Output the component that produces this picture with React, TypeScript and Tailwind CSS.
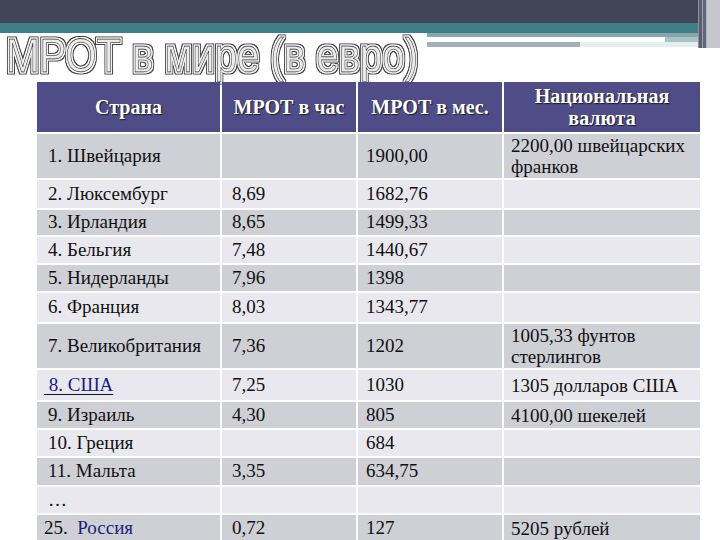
import React from "react";

type Row = {
  c: React.ReactNode;
  h: string;
  m: string;
  n: string;
  ht: string;
  pl?: string;
};

const rows: Row[] = [
  { c: "1. Швейцария", h: "", m: "1900,00", n: "2200,00 швейцарских франков", ht: "h-[44px]" },
  { c: "2. Люксембург", h: "8,69", m: "1682,76", n: "", ht: "h-[28px]" },
  { c: "3. Ирландия", h: "8,65", m: "1499,33", n: "", ht: "h-[25px]" },
  { c: "4. Бельгия", h: "7,48", m: "1440,67", n: "", ht: "h-[26px]" },
  { c: "5. Нидерланды", h: "7,96", m: "1398", n: "", ht: "h-[26px]" },
  { c: "6. Франция", h: "8,03", m: "1343,77", n: "", ht: "h-[29px]" },
  { c: "7. Великобритания", h: "7,36", m: "1202", n: "1005,33 фунтов стерлингов", ht: "h-[44px]" },
  {
    c: <span className="text-[#1a1a80] underline underline-offset-[3px] decoration-[#111]">{"\u00a08. США"}</span>,
    h: "7,25",
    m: "1030",
    n: "1305 долларов США",
    ht: "h-[30px]",
    pl: "pl-[7px]",
  },
  { c: "9. Израиль", h: "4,30", m: "805", n: "4100,00 шекелей", ht: "h-[26px]" },
  { c: "10. Греция", h: "", m: "684", n: "", ht: "h-[26px]" },
  { c: "11. Мальта", h: "3,35", m: "634,75", n: "", ht: "h-[27px]" },
  { c: "…", h: "", m: "", n: "", ht: "h-[26px]" },
  {
    c: (
      <span>
        25.&nbsp; <span className="text-[#1f1f7a]">Россия</span>
      </span>
    ),
    h: "0,72",
    m: "127",
    n: "5205 рублей",
    ht: "h-[26px]",
    pl: "pl-[7px]",
  },
];

function Title() {
  return (
    <svg width="427" height="49" className="block overflow-visible">
      <defs>
        <filter id="dbl" x="-5%" y="-30%" width="110%" height="160%">
          <feMorphology in="SourceAlpha" operator="dilate" radius="2" result="outer" />
          <feFlood floodColor="#3a3a3a" result="dark" />
          <feComposite in="dark" in2="outer" operator="in" result="outerDark" />
          <feMorphology in="SourceAlpha" operator="dilate" radius="1.2" result="mid" />
          <feFlood floodColor="#ffffff" result="white" />
          <feComposite in="white" in2="mid" operator="in" result="midWhite" />
          <feMerge>
            <feMergeNode in="outerDark" />
            <feMergeNode in="midWhite" />
            <feMergeNode in="SourceGraphic" />
          </feMerge>
        </filter>
      </defs>
      <text
        x="6"
        y="39"
        fontFamily="'Liberation Sans', Arial, sans-serif"
        fontSize="49"
        fill="#ececec"
        stroke="#3a3a3a"
        strokeWidth="0.8"
        textLength="412"
        lengthAdjust="spacingAndGlyphs"
        filter="url(#dbl)"
      >
        МРОТ в мире (в евро)
      </text>
    </svg>
  );
}

const headCls =
  "h-[50px] bg-[#4f4c87] flex items-center justify-center text-center text-white font-bold text-[20px] leading-[22px] [text-shadow:1px_1px_1px_#1a1a2a]";

export default function App() {
  return (
    <div className="w-[720px] h-[540px] bg-white overflow-hidden flex flex-col [font-family:'Liberation_Serif',serif]">
      {/* top decoration */}
      <div className="flex">
        <div className="flex-1 flex flex-col">
          <div className="h-[23px] bg-[#414557]" />
          <div className="h-[10px] bg-[#3e7f87]" />
          <div className="flex h-[49px]">
            <div className="w-[427px]">
              <Title />
            </div>
            <div className="flex-1 flex flex-col">
              <div className="h-[4px] bg-[#86a7ab]" />
              <div className="h-[5px] flex">
                <div className="w-[238px] bg-white" />
                <div className="flex-1 bg-[#acc4c7]" />
              </div>
              <div className="h-[5px] flex">
                <div className="w-[153px] bg-[#a2b1b3]" />
                <div className="flex-1 bg-[#e4eeee]" />
              </div>
            </div>
          </div>
        </div>
        <div className="w-[22px] h-[48px] flex">
          <div className="w-[1px] bg-[#8e8e9c]" />
          <div className="w-[3px] bg-[#5a5e70]" />
          <div className="w-[1px] bg-[#a0a0ac]" />
          <div className="w-[3px] bg-[#62667a]" />
          <div className="w-[1px] bg-[#b0b0bc]" />
          <div className="flex-1 bg-[#c6c6ce]" />
        </div>
      </div>

      {/* table */}
      <div className="pl-[37px]">
        <div className="grid grid-cols-[183px_134px_144px_196px] gap-[2px] w-[663px]">
          <div className={headCls}>Страна</div>
          <div className={headCls}>МРОТ в час</div>
          <div className={headCls}>МРОТ в мес.</div>
          <div className={headCls}>
            Национальная
            <br />
            валюта
          </div>
          {rows.map((r, i) => {
            const bg = i % 2 === 0 ? "bg-[#cfcfd6]" : "bg-[#e8e8ee]";
            return (
              <React.Fragment key={i}>
                <div className={`${r.ht} ${bg} ${r.pl ?? "pl-[11px]"} flex items-center text-[19px] text-[#111] whitespace-nowrap`}>
                  {r.c}
                </div>
                <div className={`${r.ht} ${bg} pl-[10px] flex items-center text-[19px] text-[#111]`}>{r.h}</div>
                <div className={`${r.ht} ${bg} pl-[8px] flex items-center text-[19px] text-[#111]`}>{r.m}</div>
                <div className={`${r.ht} ${bg} pl-[7px] pr-[2px] flex items-center text-[19px] leading-[21px] text-[#111]`}>
                  {r.n}
                </div>
              </React.Fragment>
            );
          })}
        </div>
      </div>
    </div>
  );
}
